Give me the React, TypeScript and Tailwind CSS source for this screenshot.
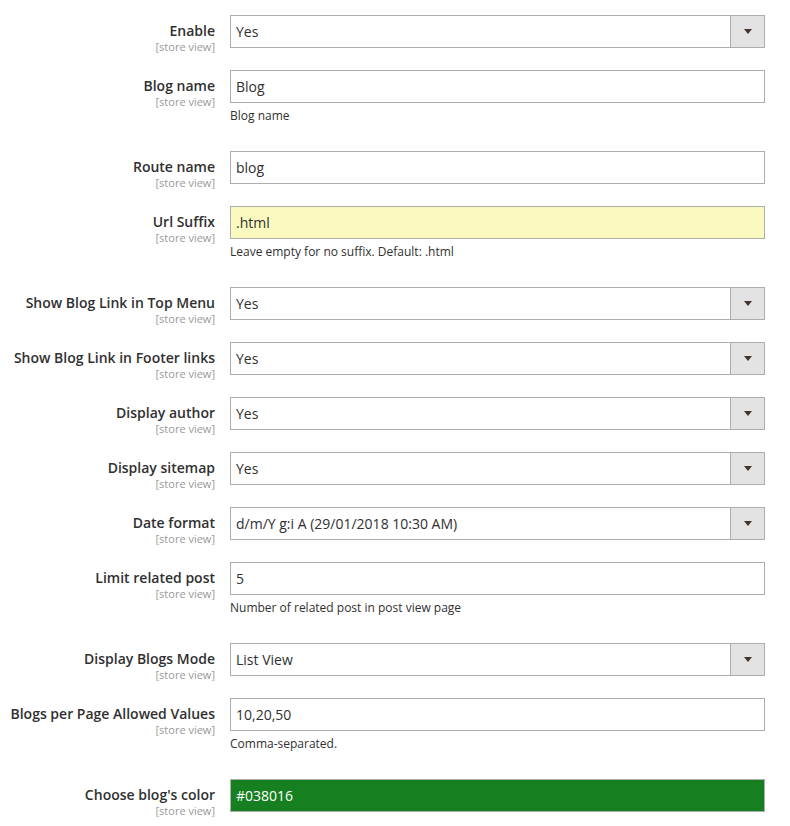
type Field = {
  label: string;
  value: string;
  type?: "select" | "text";
  note?: string;
  variant?: "yellow" | "green";
};

const fields: Field[] = [
  { label: "Enable", value: "Yes", type: "select" },
  { label: "Blog name", value: "Blog", note: "Blog name" },
  { label: "Route name", value: "blog" },
  {
    label: "Url Suffix",
    value: ".html",
    note: "Leave empty for no suffix. Default: .html",
    variant: "yellow",
  },
  { label: "Show Blog Link in Top Menu", value: "Yes", type: "select" },
  { label: "Show Blog Link in Footer links", value: "Yes", type: "select" },
  { label: "Display author", value: "Yes", type: "select" },
  { label: "Display sitemap", value: "Yes", type: "select" },
  { label: "Date format", value: "d/m/Y g:i A (29/01/2018 10:30 AM)", type: "select" },
  {
    label: "Limit related post",
    value: "5",
    note: "Number of related post in post view page",
  },
  { label: "Display Blogs Mode", value: "List View", type: "select" },
  {
    label: "Blogs per Page Allowed Values",
    value: "10,20,50",
    note: "Comma-separated.",
  },
  { label: "Choose blog's color", value: "#038016", variant: "green" },
];

const Row = ({ field }: { field: Field }) => {
  const bg =
    field.variant === "yellow"
      ? "bg-[#fafac0] text-[#303030]"
      : field.variant === "green"
        ? "bg-[#168020] text-white"
        : "bg-white text-[#303030]";

  return (
    <div className="flex mb-[22px]">
      {/* Label - store view hint hangs below the input line */}
      <div className="w-[215px] h-[33px] shrink-0 text-right pt-[7px]">
        <div className="text-[14px] leading-[18px] font-semibold text-[#303030]">
          {field.label}
        </div>
        <div className="text-[11px] leading-[13px] text-[#999]">[store view]</div>
      </div>

      {/* Control */}
      <div className="ml-[15px] w-[535px]">
        <div className={`flex h-[33px] border border-[#adadad] ${bg} text-[14px]`}>
          <div className="flex-1 flex items-center pl-[5px]">{field.value}</div>
          {field.type === "select" && (
            <div className="w-[34px] border-l border-[#adadad] bg-[#e3e3e3] flex items-center justify-center">
              <svg width="8" height="5" viewBox="0 0 8 5">
                <path d="M0 0 H8 L4 5 Z" fill="#41362f" />
              </svg>
            </div>
          )}
        </div>
        {field.note && (
          <div className="mt-[4px] mb-[4px] text-[12px] leading-[18px] text-[#303030]">
            {field.note}
          </div>
        )}
      </div>
    </div>
  );
};

const App = () => {
  return (
    <div
      className="w-[790px] min-h-[826px] bg-white pt-[15px]"
      style={{ fontFamily: '"Open Sans", sans-serif' }}
    >
      {fields.map((f) => (
        <Row key={f.label} field={f} />
      ))}
    </div>
  );
};

export default App;
